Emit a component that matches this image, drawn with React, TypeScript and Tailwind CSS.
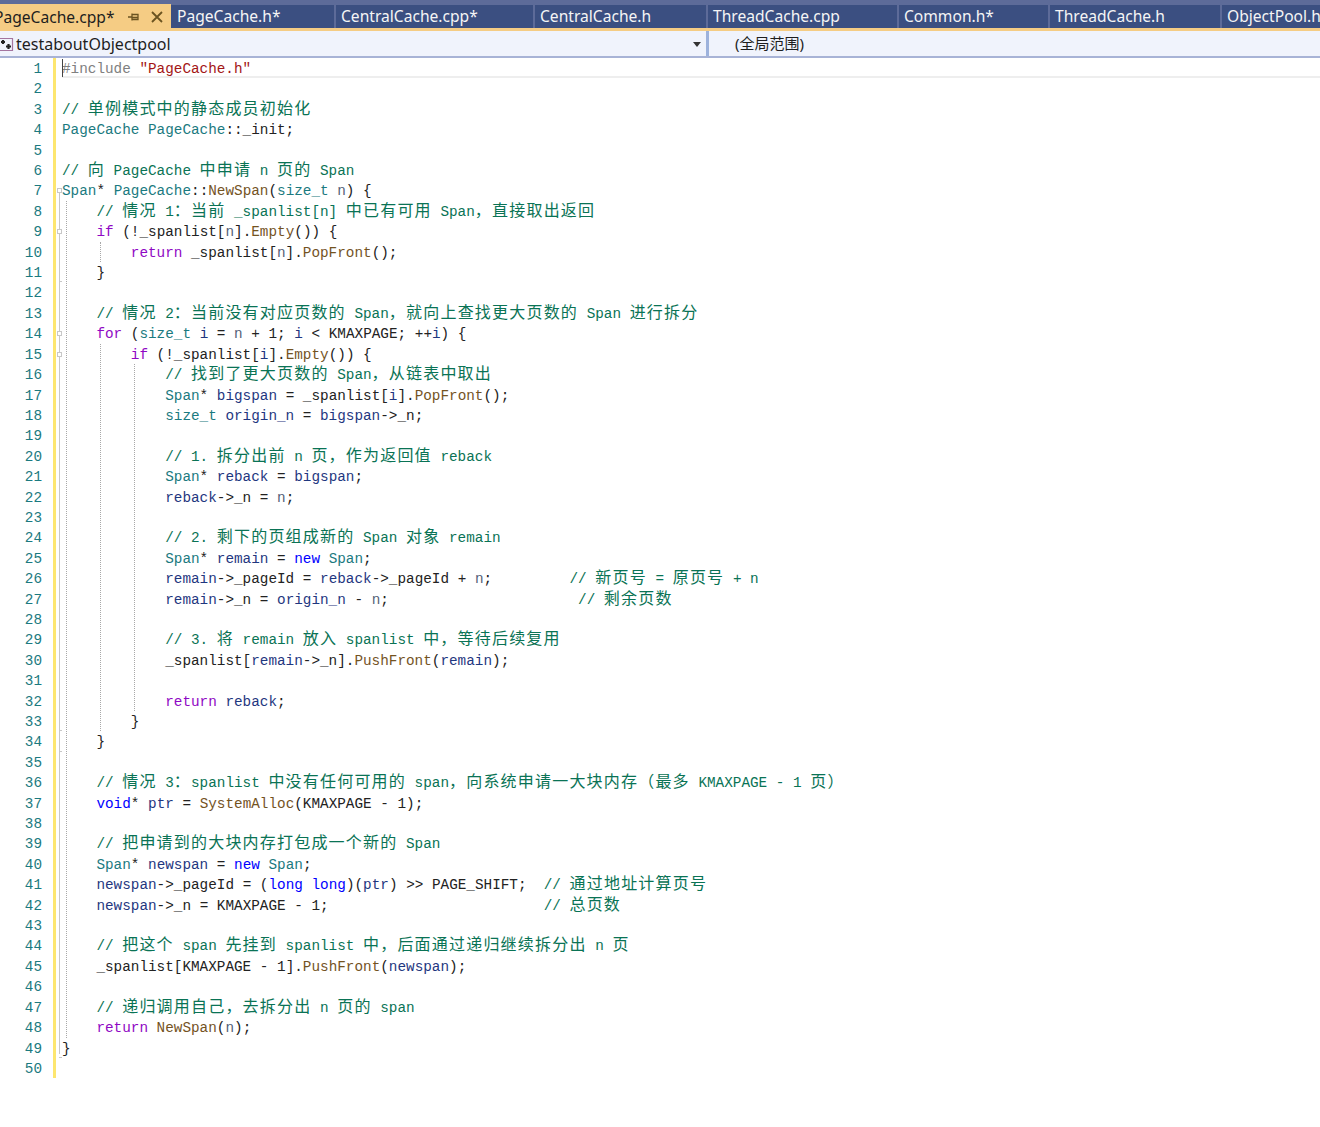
import React from "react";

const SOURCE = [
  '#include "PageCache.h"',
  '',
  '// 单例模式中的静态成员初始化',
  'PageCache PageCache::_init;',
  '',
  '// 向 PageCache 中申请 n 页的 Span',
  'Span* PageCache::NewSpan(size_t n) {',
  '    // 情况 1：当前 _spanlist[n] 中已有可用 Span，直接取出返回',
  '    if (!_spanlist[n].Empty()) {',
  '        return _spanlist[n].PopFront();',
  '    }',
  '',
  '    // 情况 2：当前没有对应页数的 Span，就向上查找更大页数的 Span 进行拆分',
  '    for (size_t i = n + 1; i < KMAXPAGE; ++i) {',
  '        if (!_spanlist[i].Empty()) {',
  '            // 找到了更大页数的 Span，从链表中取出',
  '            Span* bigspan = _spanlist[i].PopFront();',
  '            size_t origin_n = bigspan->_n;',
  '',
  '            // 1. 拆分出前 n 页，作为返回值 reback',
  '            Span* reback = bigspan;',
  '            reback->_n = n;',
  '',
  '            // 2. 剩下的页组成新的 Span 对象 remain',
  '            Span* remain = new Span;',
  '            remain->_pageId = reback->_pageId + n;         // 新页号 = 原页号 + n',
  '            remain->_n = origin_n - n;                      // 剩余页数',
  '',
  '            // 3. 将 remain 放入 spanlist 中，等待后续复用',
  '            _spanlist[remain->_n].PushFront(remain);',
  '',
  '            return reback;',
  '        }',
  '    }',
  '',
  '    // 情况 3：spanlist 中没有任何可用的 span，向系统申请一大块内存（最多 KMAXPAGE - 1 页）',
  '    void* ptr = SystemAlloc(KMAXPAGE - 1);',
  '',
  '    // 把申请到的大块内存打包成一个新的 Span',
  '    Span* newspan = new Span;',
  '    newspan->_pageId = (long long)(ptr) >> PAGE_SHIFT;  // 通过地址计算页号',
  '    newspan->_n = KMAXPAGE - 1;                         // 总页数',
  '',
  '    // 把这个 span 先挂到 spanlist 中，后面通过递归继续拆分出 n 页',
  '    _spanlist[KMAXPAGE - 1].PushFront(newspan);',
  '',
  '    // 递归调用自己，去拆分出 n 页的 span',
  '    return NewSpan(n);',
  '}',
  '',
];

const TABS = [
  { name: "PageCache.h*", w: "w-[163px] pl-[6px]" },
  { name: "CentralCache.cpp*", w: "w-[197px] pl-[5px]" },
  { name: "CentralCache.h", w: "w-[171px] pl-[5px]" },
  { name: "ThreadCache.cpp", w: "w-[189px] pl-[5px]" },
  { name: "Common.h*", w: "w-[149px] pl-[5px]" },
  { name: "ThreadCache.h", w: "w-[170px] pl-[5px]" },
  { name: "ObjectPool.h", w: "w-[98px] pl-[5px]" },
];

const ROW = 20.408;
const GUIDES = [
  { x: 66, from: 8, to: 48 },
  { x: 100, from: 10, to: 10 },
  { x: 100, from: 15, to: 33 },
  { x: 134, from: 16, to: 32 },
];
const BOXES = [7, 9, 14, 15];
const ENDS = [11, 34, 33, 49];

const WORDS: Record<string, string> = {
  if: "text-[#8f08c4]",
  for: "text-[#8f08c4]",
  return: "text-[#8f08c4]",
  new: "text-[#0000ff]",
  void: "text-[#0000ff]",
  long: "text-[#0000ff]",
  Span: "text-[#1b7a80]",
  PageCache: "text-[#1b7a80]",
  size_t: "text-[#1b7a80]",
  NewSpan: "text-[#74531f]",
  PopFront: "text-[#74531f]",
  Empty: "text-[#74531f]",
  PushFront: "text-[#74531f]",
  SystemAlloc: "text-[#74531f]",
  bigspan: "text-[#1f377f]",
  origin_n: "text-[#1f377f]",
  reback: "text-[#1f377f]",
  remain: "text-[#1f377f]",
  newspan: "text-[#1f377f]",
  ptr: "text-[#1f377f]",
  i: "text-[#1f377f]",
  n: "text-[#555f78]",
};

function Cjk({ text }: { text: string }) {
  const parts = text.split(/([\u3000-\u9fff\uff00-\uffef]+)/);
  return (
    <>
      {parts.map((p, i) =>
        i % 2 === 1 ? (
          <span key={i} className="font-['Noto_Sans_CJK_SC'] text-[16px] leading-[0] tracking-[1.2px]">
            {p}
          </span>
        ) : (
          <span key={i}>{p}</span>
        ),
      )}
    </>
  );
}

function CodeLine({ text }: { text: string }) {
  if (text.startsWith("#include")) {
    return (
      <>
        <span className="text-[#808080]">#include </span>
        <span className="text-[#a31515]">"PageCache.h"</span>
      </>
    );
  }
  const at = text.indexOf("//");
  const code = at >= 0 ? text.slice(0, at) : text;
  const comment = at >= 0 ? text.slice(at) : "";
  const tokens = code.match(/[A-Za-z_][A-Za-z0-9_]*|\s+|./g) ?? [];
  return (
    <>
      {tokens.map((t, i) => (
        <span key={i} className={WORDS[t] ?? "text-[#222222]"}>
          {t}
        </span>
      ))}
      {comment && (
        <span className="text-[#0a7355]">
          <Cjk text={comment} />
        </span>
      )}
    </>
  );
}

export default function App() {
  return (
    <div className="w-[1320px] h-[1127px] overflow-hidden bg-white font-['Noto_Sans','Noto_Sans_CJK_SC',sans-serif]">
      <div className="h-[28px] bg-[#5d6b99] pt-[5px] flex gap-[2px] relative">
        <div className="absolute left-0 top-[4px] w-[171px] h-[27px] bg-[#f5cc84] flex items-center overflow-hidden">
          <span className="text-[15.6px] text-[#1e1e1e] -ml-[6px] whitespace-pre">PageCache.cpp*</span>
          <svg className="absolute left-[128px] top-[7px]" width="12" height="12" viewBox="0 0 12 12" fill="none" stroke="#6b5320" strokeWidth="1.3">
            <path d="M0 6h4M4 2.5v7M4 3.5h6v5H4M4 6.5h6" />
          </svg>
          <svg className="absolute left-[151px] top-[7px]" width="12" height="12" viewBox="0 0 12 12" fill="none" stroke="#6b5320" strokeWidth="1.8">
            <path d="M1 1l10 10M11 1L1 11" />
          </svg>
        </div>
        <div className="w-[169px] shrink-0" />
        {TABS.map((t) => (
          <div key={t.name} className={`${t.w} shrink-0 h-[23px] bg-[#3b4f81] text-[15.6px] leading-[23px] text-[#f5f5f5] whitespace-pre overflow-hidden`}>
            {t.name}
          </div>
        ))}
      </div>
      <div className="h-[3px] bg-[#f5cc84]" />
      <div className="h-[27px] bg-[#f0f3fc] border-b-2 border-[#a8b3d6] flex relative">
        <div className="w-[706px] flex items-center relative shrink-0">
          <svg className="shrink-0 mt-[1px]" width="14" height="15" viewBox="0 0 14 15" fill="none">
            <path d="M-1 1.5h13.5v12H-1" stroke="#a4759f" strokeWidth="1.2" />
            <path d="M3 3v4M1 5h4M8.5 7v5M6 9.5h5" stroke="#222" strokeWidth="2.2" />
          </svg>
          <span className="ml-[2px] mt-[1px] text-[16px] text-[#1e1e1e] leading-[25px]">testaboutObjectpool</span>
          <svg className="absolute left-[692px] top-[11px]" width="10" height="6" viewBox="0 0 10 6">
            <path d="M1 0h8L5 5z" fill="#333" />
          </svg>
        </div>
        <div className="w-[3px] bg-[#9db2dc] shrink-0" />
        <span className="ml-[26px] text-[15px] text-[#1e1e1e] leading-[25px]">(全局范围)</span>
      </div>
      <div className="relative font-['Liberation_Mono','Noto_Sans_CJK_SC',monospace] text-[14.33px]">
        {SOURCE.map((line, i) => (
          <div key={i} className="flex h-[20.408px] leading-[20.408px] whitespace-pre">
            <div className="w-[42px] pt-[1px] text-right text-[#1b7a80] shrink-0">{i + 1}</div>
            <div className="w-[11px] shrink-0" />
            <div className="w-[3px] bg-[#fde66f] shrink-0" />
            <div className="w-[6px] shrink-0" />
            <div className={i === 0 ? "flex-1 pt-[1px] border-b-2 border-[#eeeeee]" : "flex-1 pt-[1px]"}>
              <CodeLine text={line} />
            </div>
          </div>
        ))}
        <div className="absolute left-[62px] top-[1px] w-px h-[18px] bg-[#444444]" />
        <div
          className="absolute left-[59px] w-px bg-[#c8c8c8]"
          style={{ top: ROW * 6 + 10, height: ROW * 42 + 6 }}
        />
        {GUIDES.map((g) => (
          <div
            key={`${g.x}-${g.from}`}
            className="absolute w-0 border-l border-dotted border-[#a8a8a8]"
            style={{ left: g.x, top: ROW * (g.from - 1), height: ROW * (g.to - g.from + 1) }}
          />
        ))}
        {BOXES.map((n) => (
          <div
            key={n}
            className="absolute left-[57px] w-[5px] h-[5px] border border-[#c8c8c8] bg-white"
            style={{ top: ROW * (n - 1) + 8 }}
          />
        ))}
        {ENDS.map((n) => (
          <div
            key={n}
            className="absolute left-[59px] w-[3px] h-px bg-[#c8c8c8]"
            style={{ top: ROW * n - 1 }}
          />
        ))}
      </div>
    </div>
  );
}
